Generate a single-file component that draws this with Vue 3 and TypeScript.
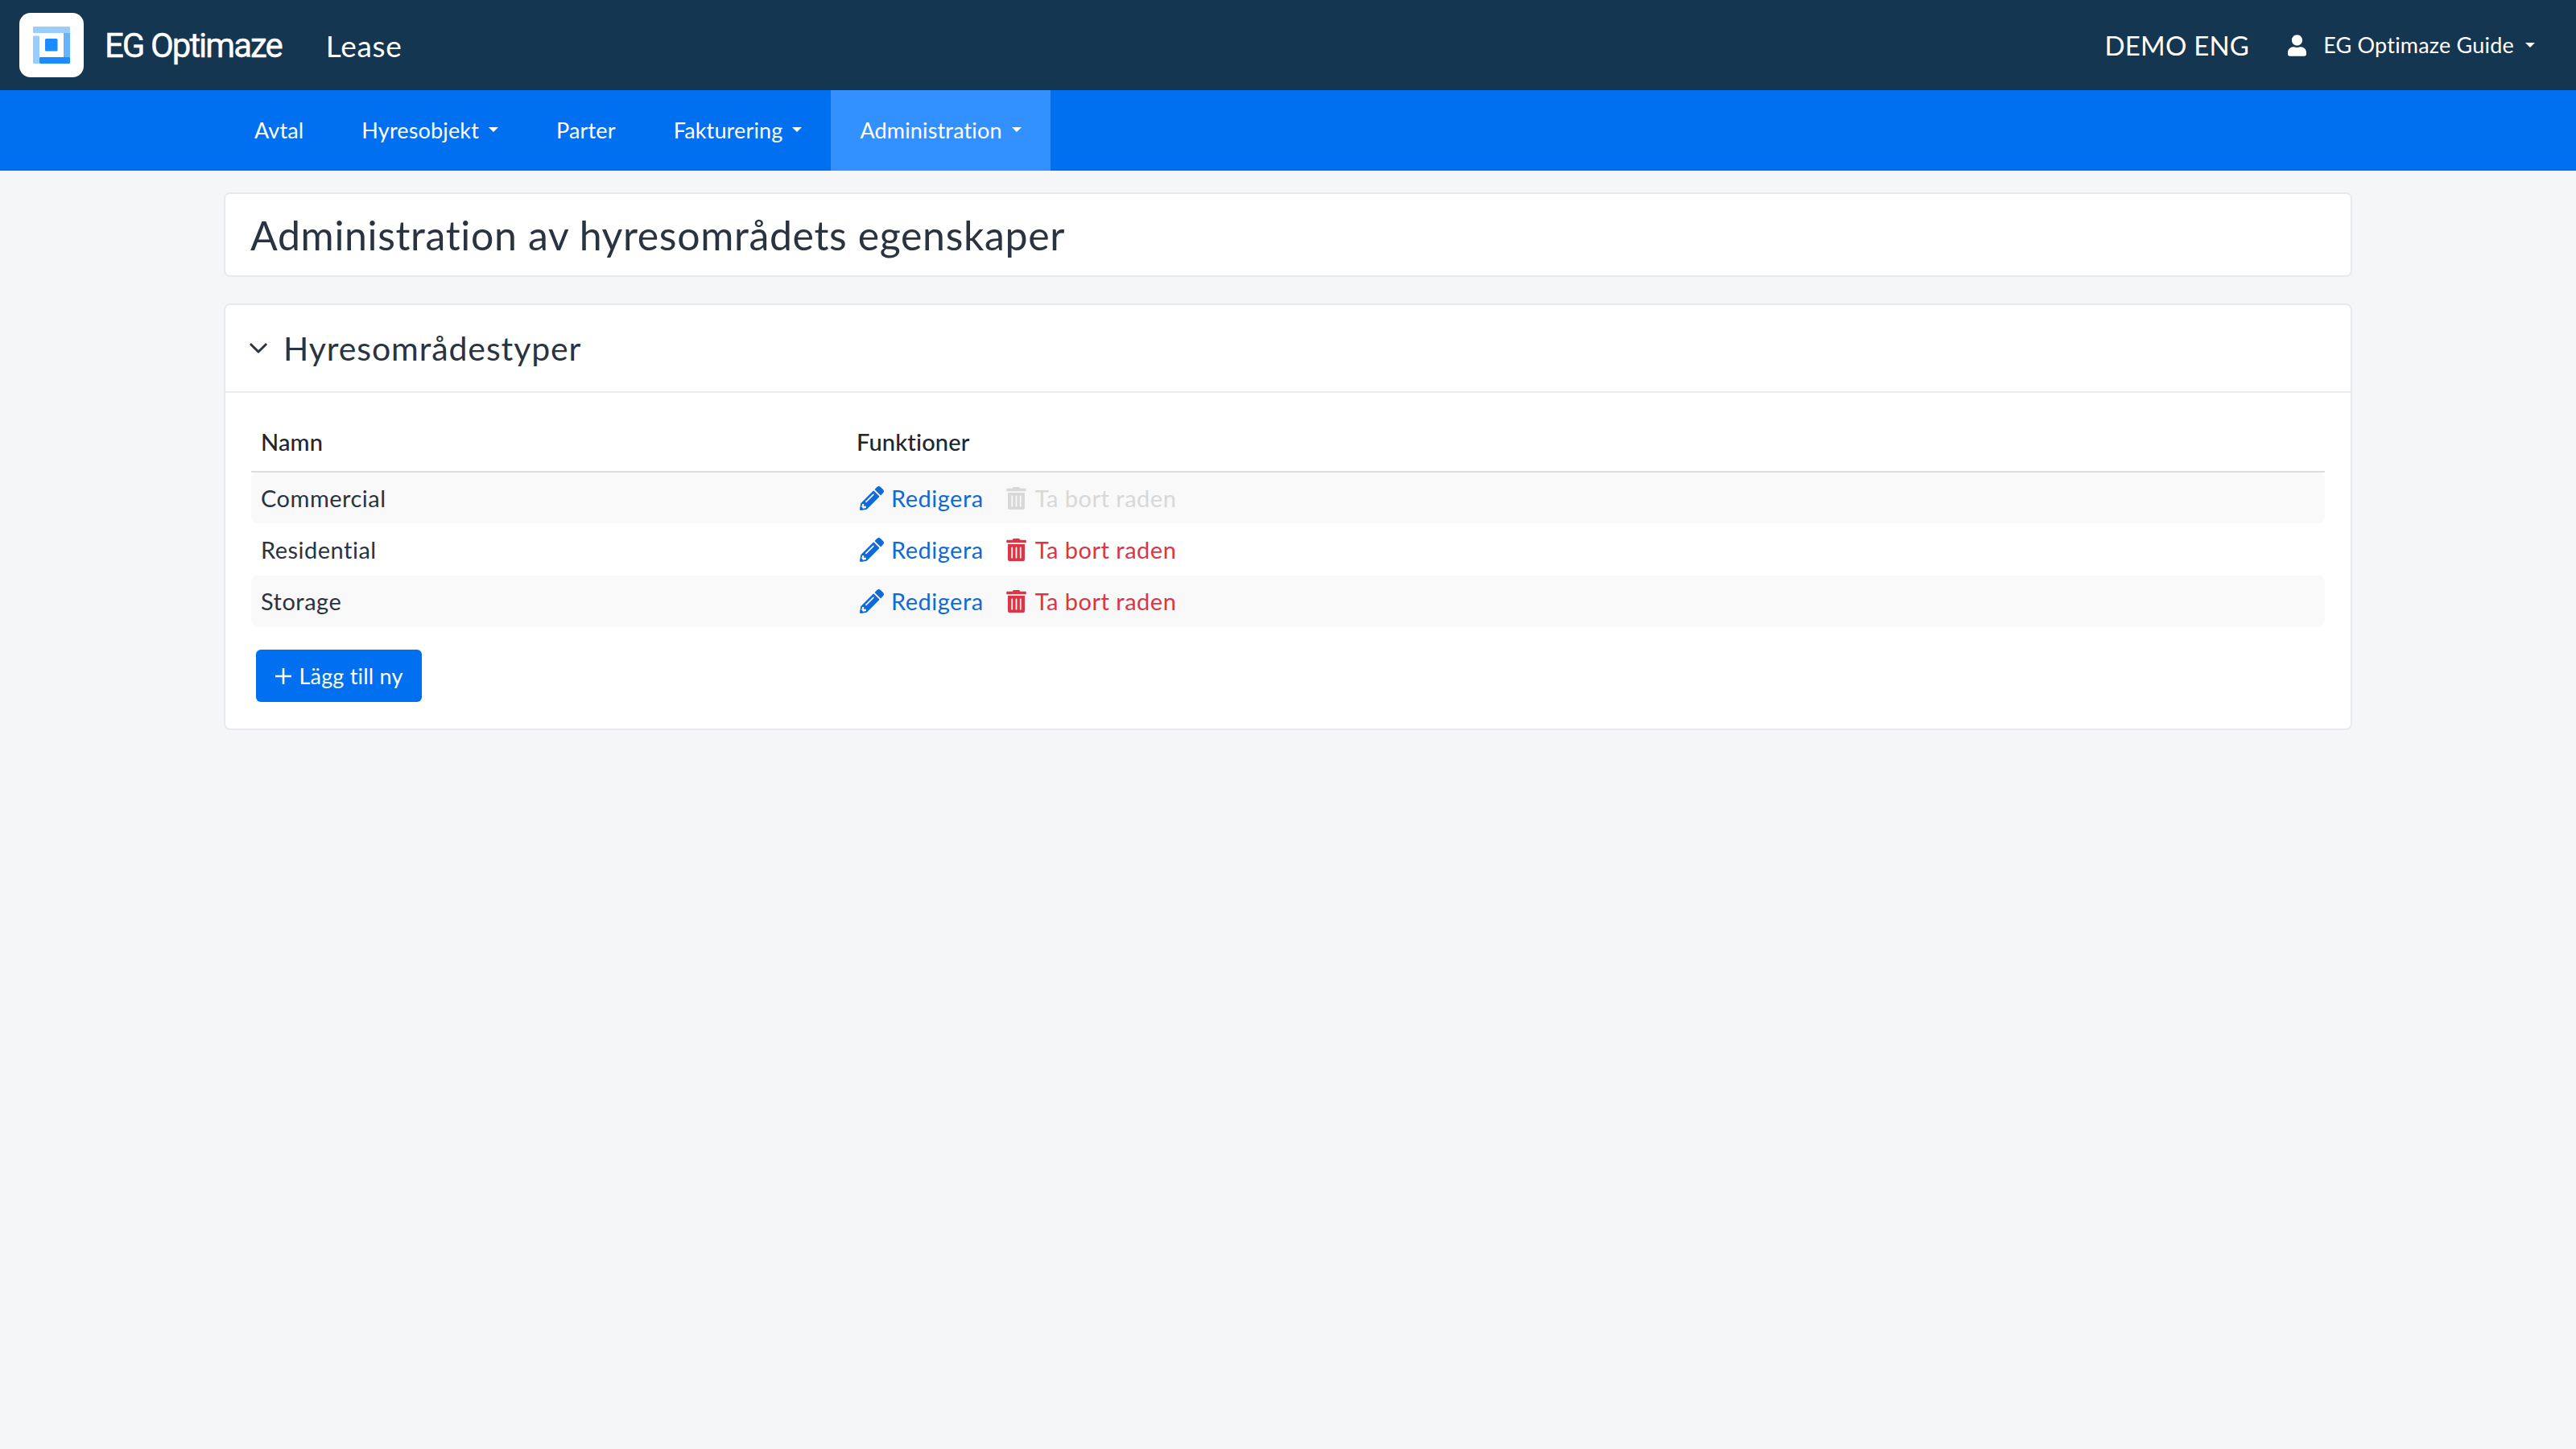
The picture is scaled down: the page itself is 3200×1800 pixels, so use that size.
<template>
  <div class="page">
    <header class="topbar">
      <div class="logo">
        <svg width="46" height="46" viewBox="0 0 46 46">
          <rect x="0" y="0" width="46" height="8" rx="1" fill="#99ccff" />
          <rect x="0" y="11.5" width="8" height="34.5" rx="1" fill="#99ccff" />
          <rect x="38" y="8" width="8" height="30" fill="#66b3ff" />
          <rect x="8" y="38" width="38" height="8" rx="1" fill="#1a8cff" />
          <rect x="15" y="15" width="15.5" height="15.5" rx="1.5" fill="#1a8cff" />
        </svg>
      </div>
      <span class="brand">EG Optimaze</span>
      <span class="product">Lease</span>
      <div class="topbar-right">
        <span class="tenant">DEMO ENG</span>
        <svg class="user-icon" viewBox="0 0 448 512">
          <path fill="#fff" d="M224 256c70.7 0 128-57.3 128-128S294.7 0 224 0 96 57.3 96 128s57.3 128 128 128zm89.6 32h-16.7c-22.2 10.2-46.9 16-72.9 16s-50.6-5.8-72.9-16h-16.7C60.2 288 0 348.2 0 422.4V464c0 26.5 21.5 48 48 48h352c26.5 0 48-21.5 48-48v-41.6c0-74.2-60.2-134.4-134.4-134.4z" />
        </svg>
        <span class="user-name">EG Optimaze Guide</span>
        <i class="caret user-caret"></i>
      </div>
    </header>

    <nav class="mainnav">
      <a v-for="item in navItems" :key="item.label" class="nav-item" :class="{ active: item.active }">
        {{ item.label }}
        <i v-if="item.dropdown" class="caret"></i>
      </a>
    </nav>

    <main class="content">
      <div class="card title-card">
        <h1>Administration av hyresområdets egenskaper</h1>
      </div>

      <div class="card">
        <div class="card-header">
          <svg class="chevron" viewBox="0 0 24 14">
            <path d="M2 2l10 10L22 2" fill="none" stroke="#2a3340" stroke-width="3.2" stroke-linecap="round" stroke-linejoin="round" />
          </svg>
          <h2>Hyresområdestyper</h2>
        </div>
        <div class="card-body">
          <table>
            <thead>
              <tr>
                <th class="col-name">Namn</th>
                <th>Funktioner</th>
              </tr>
            </thead>
            <tbody>
              <tr v-for="row in rows" :key="row.name">
                <td>{{ row.name }}</td>
                <td>
                  <div class="actions">
                    <a class="action edit">
                      <svg class="icon" viewBox="0 0 512 512">
                        <path fill="currentColor" d="M497.9 142.1l-46.1 46.1c-4.7 4.7-12.3 4.7-17 0l-111-111c-4.7-4.7-4.7-12.3 0-17l46.1-46.1c18.7-18.7 49.1-18.7 67.9 0l60.1 60.1c18.8 18.7 18.8 49.1 0 67.9zM284.2 99.8L21.6 362.4.4 483.9c-2.9 16.4 11.4 30.6 27.8 27.8l121.5-21.3 262.6-262.6c4.7-4.7 4.7-12.3 0-17l-111-111c-4.8-4.7-12.4-4.7-17.1 0zM124.1 339.9c-5.5-5.5-5.5-14.3 0-19.8l154-154c5.5-5.5 14.3-5.5 19.8 0s5.5 14.3 0 19.8l-154 154c-5.5 5.5-14.3 5.5-19.8 0zM88 424h48v36.3l-64.5 11.3-31.1-31.1L51.7 376H88v48z" />
                      </svg>
                      Redigera
                    </a>
                    <a class="action remove" :class="{ disabled: row.locked }">
                      <svg class="icon trash" viewBox="0 0 448 512">
                        <path fill="currentColor" d="M32 464a48 48 0 0 0 48 48h288a48 48 0 0 0 48-48V128H32zm272-256a16 16 0 0 1 32 0v224a16 16 0 0 1-32 0zm-96 0a16 16 0 0 1 32 0v224a16 16 0 0 1-32 0zm-96 0a16 16 0 0 1 32 0v224a16 16 0 0 1-32 0zM432 32H312l-9.4-18.7A24 24 0 0 0 281.1 0H166.8a23.72 23.72 0 0 0-21.4 13.3L136 32H16A16 16 0 0 0 0 48v32a16 16 0 0 0 16 16h416a16 16 0 0 0 16-16V48a16 16 0 0 0-16-16z" />
                      </svg>
                      Ta bort raden
                    </a>
                  </div>
                </td>
              </tr>
            </tbody>
          </table>
          <button class="add-btn" type="button">
            <svg class="plus" viewBox="0 0 20 20">
              <path d="M10 1v18M1 10h18" stroke="#fff" stroke-width="2.4" fill="none" />
            </svg>
            Lägg till ny
          </button>
        </div>
      </div>
    </main>
  </div>
</template>

<script setup lang="ts">
interface NavItem {
  label: string
  dropdown?: boolean
  active?: boolean
}

interface AreaType {
  name: string
  locked?: boolean
}

const navItems: NavItem[] = [
  { label: 'Avtal' },
  { label: 'Hyresobjekt', dropdown: true },
  { label: 'Parter' },
  { label: 'Fakturering', dropdown: true },
  { label: 'Administration', dropdown: true, active: true },
]

const rows: AreaType[] = [
  { name: 'Commercial', locked: true },
  { name: 'Residential' },
  { name: 'Storage' },
]
</script>

<style>
html,
body {
  background: #f5f6f8;
}
</style>

<style scoped>
.page,
.page * {
  box-sizing: border-box;
}

.page {
  min-height: 1800px;
  background: #f5f6f8;
  font-family: "Lato", "Noto Sans", sans-serif;
  color: #2a3340;
}

.topbar {
  height: 112px;
  background: #153650;
  display: flex;
  align-items: center;
  padding: 0 51px 0 24px;
  color: #fff;
}

.logo {
  width: 80px;
  height: 80px;
  background: #fff;
  border-radius: 14px;
  display: flex;
  align-items: center;
  justify-content: center;
}

.brand {
  margin-left: 26px;
  font-family: "Roboto", sans-serif;
  font-size: 42px;
  letter-spacing: -2px;
  -webkit-text-stroke: 0.4px #fff;
}

.product {
  margin-left: 55px;
  font-size: 37px;
  letter-spacing: 0.7px;
}

.topbar-right {
  margin-left: auto;
  display: flex;
  align-items: center;
}

.tenant {
  font-size: 33px;
  letter-spacing: 0.2px;
}

.user-icon {
  width: 23px;
  height: 27px;
  margin-left: 48px;
}

.user-name {
  margin-left: 21px;
  padding-bottom: 2px;
  font-size: 27px;
  letter-spacing: 0.2px;
}

.user-caret {
  margin-left: 14px;
}

.caret {
  display: inline-block;
  width: 0;
  height: 0;
  border-left: 6px solid transparent;
  border-right: 6px solid transparent;
  border-top: 6px solid #fff;
}

.mainnav {
  height: 100px;
  background: #006ff0;
  display: flex;
  padding-left: 280px;
}

.nav-item {
  display: flex;
  align-items: center;
  gap: 12px;
  padding: 0 36px 2px;
  color: #fff;
  font-size: 27px;
  letter-spacing: 0.15px;
}

.nav-item.active {
  background: #3391ff;
}

.content {
  width: 2644px;
  margin: 0 auto;
  padding-top: 27px;
  display: flex;
  flex-direction: column;
  gap: 33px;
}

.card {
  background: #fff;
  border: 2px solid #e8e9ec;
  border-radius: 8px;
}

.title-card {
  height: 105px;
  display: flex;
  align-items: center;
  padding-left: 31px;
}

h1 {
  margin: 0;
  font-size: 50px;
  font-weight: 400;
  letter-spacing: 0.65px;
}

.card-header {
  height: 109px;
  display: flex;
  align-items: center;
  padding-left: 30px;
  border-bottom: 2px solid #ebecef;
}

.chevron {
  width: 22px;
  height: 13px;
}

h2 {
  margin: 0 0 0 20px;
  font-size: 41px;
  font-weight: 400;
  letter-spacing: 0.9px;
}

.card-body {
  padding: 24px 32px 33px;
}

table {
  width: 100%;
  border-collapse: collapse;
  font-size: 29px;
}

th {
  height: 74px;
  padding: 0 12px;
  text-align: left;
  font-weight: 500;
  letter-spacing: 0.15px;
  color: #20262e;
  border-bottom: 2px solid #dcdcdc;
}

.col-name {
  width: 740px;
}

td {
  height: 64.4px;
  padding: 0 12px;
  letter-spacing: 0.5px;
}

tbody tr:nth-child(odd) td {
  background: #f9f9f9;
}

tbody tr:nth-child(odd) td:first-child {
  border-radius: 8px 0 0 8px;
}

tbody tr:nth-child(odd) td:last-child {
  border-radius: 0 8px 8px 0;
}

.actions {
  display: flex;
  align-items: center;
  gap: 28px;
}

.action {
  display: flex;
  align-items: center;
  gap: 8px;
}

.edit {
  color: #0f6ad8;
}

.remove {
  color: #dc3545;
}

.remove.disabled {
  color: #d8d8d8;
}

.icon {
  width: 30px;
  height: 30px;
  margin-left: 4px;
  margin-right: 1px;
}

.trash {
  width: 25px;
  height: 28px;
  margin: 0 3px 0 0;
}

.add-btn {
  margin: 28px 0 0 6px;
  width: 206px;
  height: 65px;
  border: none;
  border-radius: 6px;
  background: #006ff0;
  color: #fff;
  font-family: inherit;
  font-size: 27px;
  letter-spacing: 0.2px;
  display: flex;
  align-items: center;
  justify-content: center;
  gap: 8px;
}

.plus {
  width: 22px;
  height: 22px;
}
</style>
